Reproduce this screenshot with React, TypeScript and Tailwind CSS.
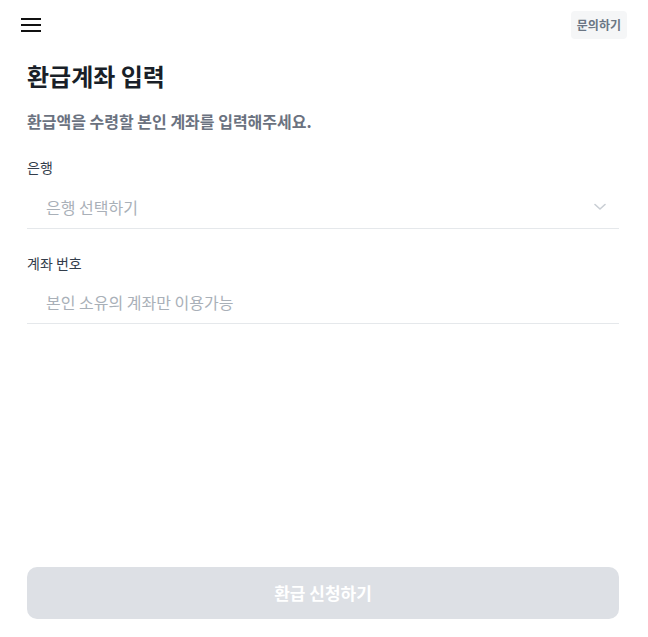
import { useState } from 'react';

function MenuIcon() {
  return (
    <svg width="20" height="14" viewBox="0 0 20 14" className="block">
      <rect x="0" y="0" width="20" height="2" fill="#111111" />
      <rect x="0" y="6" width="20" height="2" fill="#111111" />
      <rect x="0" y="12" width="20" height="2" fill="#111111" />
    </svg>
  );
}

function Chevron() {
  return (
    <svg width="12" height="8" viewBox="0 0 12 8" fill="none" className="block">
      <path d="M1 1.5L6 6L11 1.5" stroke="#c9ced4" strokeWidth="1.6" strokeLinecap="round" strokeLinejoin="round" />
    </svg>
  );
}

export default function App() {
  const [account, setAccount] = useState('');

  return (
    <div
      className="flex h-screen w-full flex-col bg-white"
      style={{ fontFamily: '"Noto Sans CJK KR", "Noto Sans", sans-serif' }}
    >
      {/* Header */}
      <header className="flex h-[50px] items-center justify-between pl-[21px] pr-[21px]">
        <button className="flex h-[20px] w-[20px] items-center">
          <MenuIcon />
        </button>
        <button className="h-[28px] rounded-[4px] bg-[#f5f6f7] px-[6px] text-[12px] font-bold text-[#6b7684]">
          문의하기
        </button>
      </header>

      {/* Form */}
      <main className="flex flex-1 flex-col pl-[27px] pr-[29px]">
        <h1 className="mt-[11px] text-[24px] font-bold leading-[30px] text-[#191f28]">환급계좌 입력</h1>
        <p className="mt-[18px] text-[16px] font-bold leading-[24px] text-[#6b7280]">
          환급액을 수령할 본인 계좌를 입력해주세요.
        </p>

        <label className="mt-[24px] text-[14px] leading-[20px] text-[#333d4b]">은행</label>
        <div className="mt-[9px] flex h-[43px] items-center justify-between border-b border-[#e5e8eb] pl-[19px] pr-[13px]">
          <span className="text-[16px] text-[#a9b0b8]">은행 선택하기</span>
          <Chevron />
        </div>

        <label className="mt-[24px] text-[14px] leading-[20px] text-[#333d4b]">계좌 번호</label>
        <div className="mt-[8px] flex h-[43px] items-center border-b border-[#e5e8eb] pl-[19px]">
          <input
            value={account}
            onChange={(e) => setAccount(e.target.value)}
            placeholder="본인 소유의 계좌만 이용가능"
            className="w-full bg-transparent text-[16px] text-[#333d4b] outline-none placeholder:text-[#a9b0b8]"
          />
        </div>

        <div className="mt-auto pb-[18px]">
          <button
            disabled
            className="h-[52px] w-full rounded-[10px] bg-[#dde0e5] text-[17px] font-bold text-white"
          >
            환급 신청하기
          </button>
        </div>
      </main>
    </div>
  );
}
